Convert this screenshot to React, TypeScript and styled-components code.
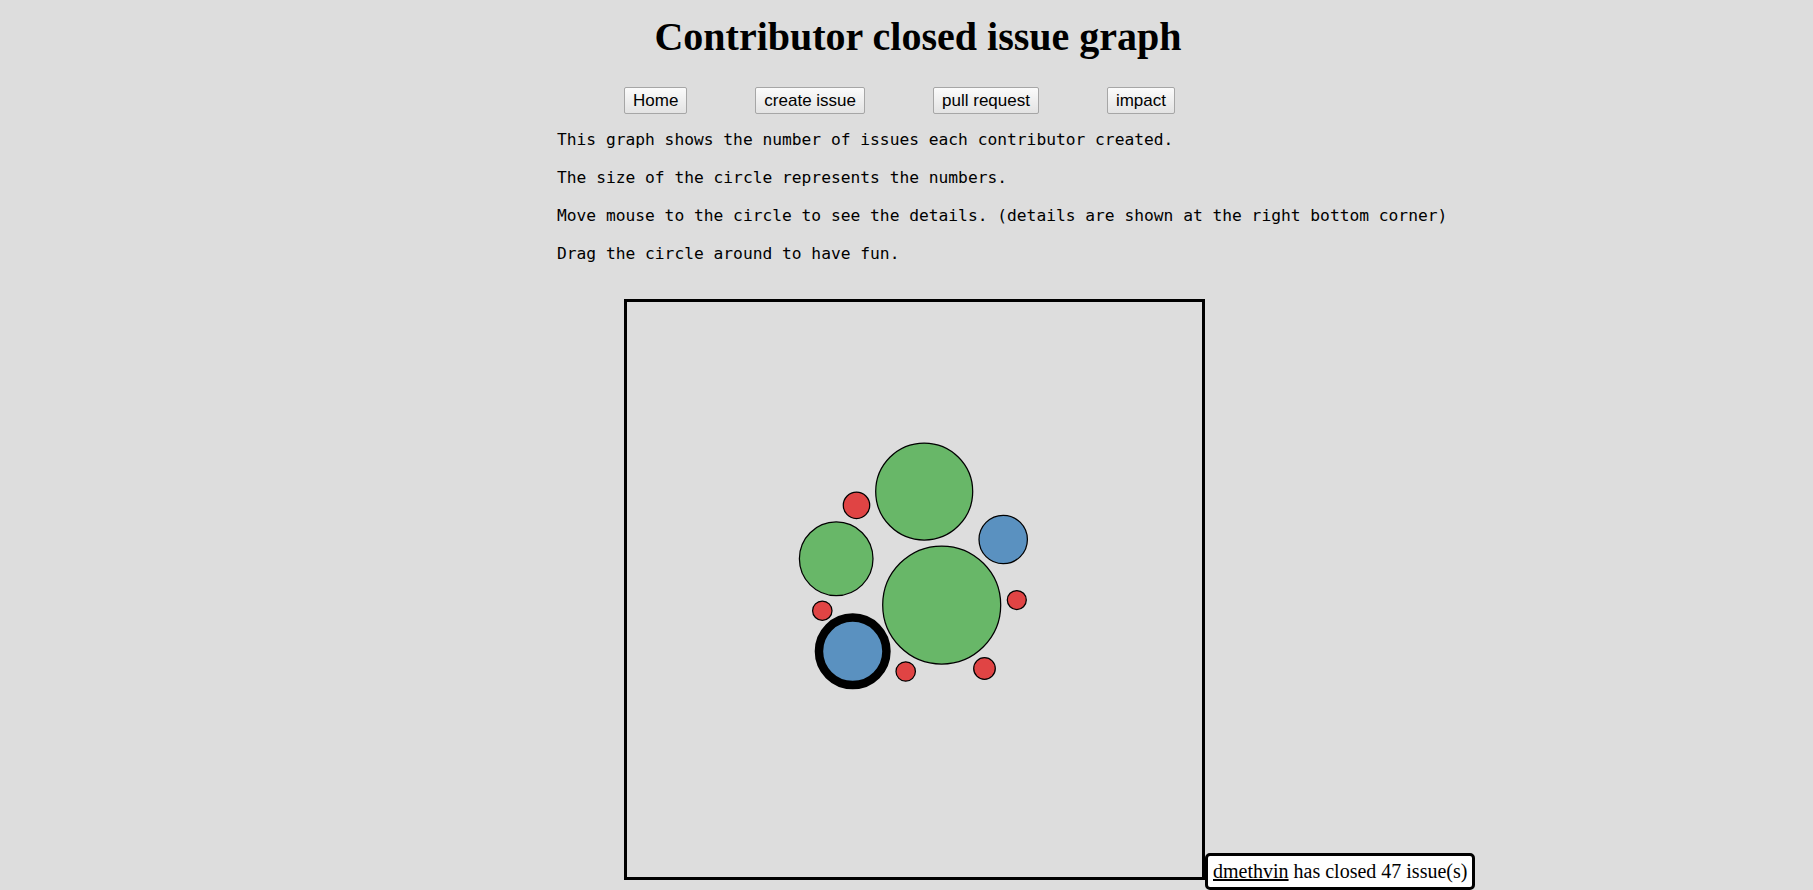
import React from "react";
import styled, { createGlobalStyle } from "styled-components";

const GlobalStyle = createGlobalStyle`
  html, body {
    margin: 0;
    padding: 0;
    background: #dddddd;
    overflow: hidden;
  }
  body {
    font-family: "Liberation Serif", "Times New Roman", serif;
    color: #000;
  }
`;

const Page = styled.div`
  display: flex;
  flex-direction: column;
  width: 1813px;
  height: 890px;
`;

const Title = styled.h1`
  margin: 14px 0 0;
  padding-left: 23px;
  text-align: center;
  font-family: "Liberation Serif", "Times New Roman", serif;
  font-weight: bold;
  font-size: 40px;
  line-height: 46px;
`;

const Nav = styled.nav`
  display: flex;
  gap: 68px;
  margin: 27px 0 0 624px;
  height: 27px;
`;

const NavButton = styled.button`
  box-sizing: border-box;
  height: 27px;
  padding: 1px 8px;
  font-family: "Liberation Sans", Arial, sans-serif;
  font-size: 17px;
  color: #000;
  background: linear-gradient(#fbfbfb, #e3e3e3);
  border: 1px solid #a6a6a6;
  border-radius: 2px;
  cursor: pointer;
`;

const Intro = styled.div`
  display: flex;
  flex-direction: column;
  gap: 19px;
  margin: 16px 0 0 557px;
`;

const IntroLine = styled.p`
  margin: 0;
  font-family: "DejaVu Sans Mono", monospace;
  font-size: 16.25px;
  line-height: 19px;
  white-space: pre;
`;

const GraphWrap = styled.div`
  position: relative;
  align-self: flex-start;
  margin: 36px 0 0 624px;
`;

const GraphBox = styled.div`
  width: 575px;
  height: 575px;
  border: 3px solid #000;
`;

const Tooltip = styled.div`
  position: absolute;
  left: 100%;
  top: 554px;
  white-space: nowrap;
  background: #fff;
  border: 3px solid #000;
  border-radius: 5px;
  padding: 4px 5px;
  font-family: "Liberation Serif", "Times New Roman", serif;
  font-size: 20px;
  line-height: 23px;
`;

const UserLink = styled.a`
  color: #000;
  text-decoration: underline;
`;

type Bubble = { x: number; y: number; r: number; kind: "green" | "blue" | "red"; active?: boolean };

const fills: Record<Bubble["kind"], string> = {
  green: "#68b768",
  blue: "#5a91c0",
  red: "#e04444",
};

const bubbles: Bubble[] = [
  { x: 297.2, y: 189.5, r: 48.5, kind: "green" },
  { x: 229.5, y: 203.3, r: 13.2, kind: "red" },
  { x: 209.2, y: 256.8, r: 36.8, kind: "green" },
  { x: 376.2, y: 237.5, r: 24.2, kind: "blue" },
  { x: 314.7, y: 303, r: 59, kind: "green" },
  { x: 389.8, y: 298, r: 9.5, kind: "red" },
  { x: 195.3, y: 308.7, r: 9.7, kind: "red" },
  { x: 225.7, y: 349.3, r: 33.75, kind: "blue", active: true },
  { x: 278.7, y: 369.5, r: 9.7, kind: "red" },
  { x: 357.5, y: 366.5, r: 10.8, kind: "red" },
];

export default function App() {
  return (
    <>
      <GlobalStyle />
      <Page>
        <Title>Contributor closed issue graph</Title>
        <Nav>
          <NavButton>Home</NavButton>
          <NavButton>create issue</NavButton>
          <NavButton>pull request</NavButton>
          <NavButton>impact</NavButton>
        </Nav>
        <Intro>
          <IntroLine>This graph shows the number of issues each contributor created.</IntroLine>
          <IntroLine>The size of the circle represents the numbers.</IntroLine>
          <IntroLine>Move mouse to the circle to see the details. (details are shown at the right bottom corner)</IntroLine>
          <IntroLine>Drag the circle around to have fun.</IntroLine>
        </Intro>
        <GraphWrap>
          <GraphBox>
            <svg width="575" height="575" viewBox="0 0 575 575">
              {bubbles.map((b, i) => (
                <circle
                  key={i}
                  cx={b.x}
                  cy={b.y}
                  r={b.r}
                  fill={fills[b.kind]}
                  stroke="#000"
                  strokeWidth={b.active ? 8.5 : 1.25}
                />
              ))}
            </svg>
          </GraphBox>
          <Tooltip>
            <UserLink href="#">dmethvin</UserLink> has closed 47 issue(s)
          </Tooltip>
        </GraphWrap>
      </Page>
    </>
  );
}
